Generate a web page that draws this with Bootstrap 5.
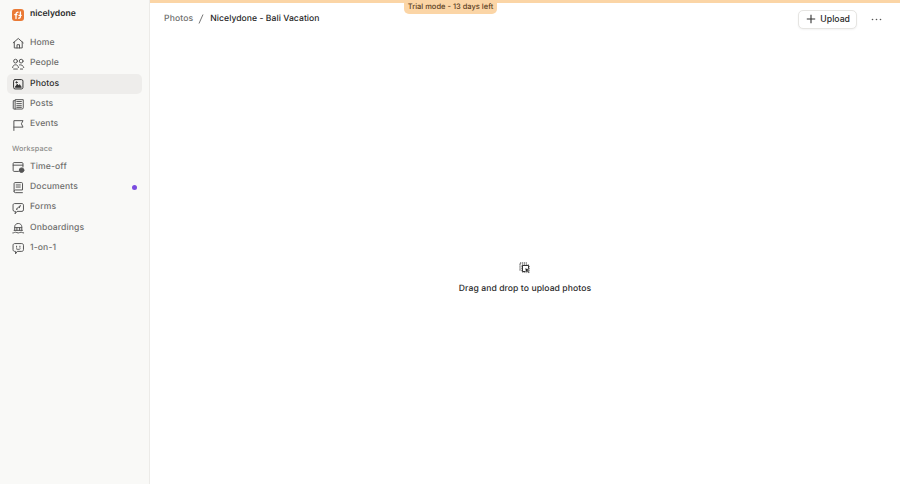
<!doctype html>
<html lang="en">
<head>
<meta charset="utf-8">
<title>Photos</title>
<link href="https://cdn.jsdelivr.net/npm/bootstrap@5.3.0/dist/css/bootstrap.min.css" rel="stylesheet">
<style>
html,body{height:100%;margin:0}
body{font-family:Inter,"Liberation Sans",sans-serif;font-size:8.6px;color:#1f1f1f;background:#fff;overflow:hidden;text-rendering:geometricPrecision}
.shell{height:484px}
.side{width:150px;flex:none;background:#f9f9f7;border-right:1px solid #ecebe8;padding:0 7px}
.brand{height:29px;padding-left:5px;gap:6px;font-weight:600;font-size:8.6px;color:#2b2b2b}
.logo{width:12px;height:12px;border-radius:3px;background:#ea7a35;flex:none}
.logo svg{display:block}
.side-list{margin:0;padding:0;list-style:none}
.top-list{margin-top:4.500px}
.nav-row{height:20px;margin-bottom:.35px;padding-left:5px;padding-right:5px;gap:5.500px;border-radius:5px;color:#6f6f6d;font-weight:500;letter-spacing:.12px}
.nav-row svg{width:12.500px;height:12.500px;flex:none;stroke:#555;fill:none;stroke-width:.95;stroke-linecap:round;stroke-linejoin:round}
.nav-row.on{background:#eeedeb;color:#2d2d2d}
.nav-row.on svg{stroke:#333}
.sect{color:#8c8c8a;font-size:7.300px;font-weight:500;letter-spacing:.1px;padding:8px 0 0 5px;height:22px;line-height:12px}
.dot{width:5px;height:5px;border-radius:50%;background:#7b4ce0}
.main{position:relative;min-width:0}
.trial-line{height:2.500px;background:#fbd5a6}
.trial{position:absolute;top:0;left:254px;width:93px;height:14px;padding-bottom:1px;text-align:center;background:#fbd5a6;border-radius:0 0 5px 5px;font-size:7.500px;font-weight:500;color:#5c3f1f;line-height:13px}
.head{height:32.500px;padding:1px 18px 0 14px}
.crumb-a{color:#6f6f6d;font-weight:500;letter-spacing:.12px}
.crumb-s{width:6px;margin:0 6px 0 5px;color:#666}
.crumb-b{color:#262626;font-weight:500;letter-spacing:.05px}
.up{height:19px;padding:0 6px 0 7px;gap:4px;font-size:8.700px;font-weight:500;color:#2a2a2a;background:#fff;border:1px solid #e6e5e2;border-radius:5px;box-shadow:0 1px 2px rgba(0,0,0,.05);line-height:1}
.up svg{width:10px;height:10px;stroke:#333;stroke-width:1.100;fill:none}
.more{margin-left:14px;width:11px}
.more svg{display:block}
.drop{flex:1;padding-top:38px}
.drop svg{width:12px;height:12px;fill:none;stroke:#333;stroke-width:1}
.drop-t{margin-top:9px;font-weight:500;color:#2a2a2a;font-size:8.600px;letter-spacing:.08px}
</style>
</head>
<body>
<div class="shell d-flex">
  <aside class="side">
    <div class="brand d-flex align-items-center">
      <span class="logo"><svg viewBox="0 0 12 12" width="12" height="12"><path d="M4 9.500V5.200C4 3.800 5 3.200 6 3.200M6.600 9.200C7.600 9.200 8.400 8.400 8.400 7.200V2.800M2.800 5.600H5M7 6.400H9.200" fill="none" stroke="#fff" stroke-width="1.300" stroke-linecap="round"/></svg></span>
      <span>nicelydone</span>
    </div>
    <ul class="side-list top-list">
      <li class="nav-row d-flex align-items-center"><svg viewBox="0 0 12 12"><path d="M1.200 5.600 6 1.400l4.800 4.200M2.200 4.800v5.700h7.600V4.800M4.800 10.500V7.400h2.400v3.100"/></svg><span>Home</span></li>
      <li class="nav-row d-flex align-items-center"><svg viewBox="0 0 12 12"><circle cx="3.400" cy="3" r="1.800"/><circle cx="8.800" cy="3" r="1.800"/><path d="M.6 9.200C.8 7.300 2 6.500 3.400 6.500s2.600.8 2.800 2.700M7.200 6.600c1.900-.4 3.700.6 4.100 2.600M1.600 10.600h3.600M8 10.600h2.200"/></svg><span>People</span></li>
      <li class="nav-row on d-flex align-items-center"><svg viewBox="0 0 12 12"><rect x="1.500" y="1.500" width="9" height="9" rx="1.500"/><path d="M3.300 8.600 5 6l1.300 1.400.9-1 1.500 2.200z" fill="#333"/><circle cx="4.300" cy="4.200" r=".6" fill="#333"/></svg><span>Photos</span></li>
      <li class="nav-row d-flex align-items-center"><svg viewBox="0 0 12 12"><path d="M3 2.600H1.200v7.400c0 .4.3.6.6.6H9.600c.7 0 1.200-.5 1.200-1.200V1.600H3v9"/><path d="M4.600 3.400h4.400M4.600 5.400h4.400M4.600 7.400h4.400M4.600 9h4.400"/></svg><span>Posts</span></li>
      <li class="nav-row d-flex align-items-center"><svg viewBox="0 0 12 12"><path d="M1.800 11V1.600h8.800L9 4.600l1.600 3.200H1.800"/></svg><span>Events</span></li>
    </ul>
    <div class="sect">Workspace</div>
    <ul class="side-list">
      <li class="nav-row d-flex align-items-center"><svg viewBox="0 0 12 12"><path d="M6.200 10H2c-.5 0-.9-.4-.9-.9V2.400c0-.5.4-.9.9-.9h7.600c.5 0 .9.4.9.9v3.400M1.100 4h9.400"/><circle cx="9.200" cy="8.800" r="2.200" fill="#555"/></svg><span>Time-off</span></li>
      <li class="nav-row d-flex align-items-center"><svg viewBox="0 0 12 12"><path d="M2 10V2.400c0-.5.4-.9.9-.9h6.400c.5 0 .8.4.8.9v6.200H3.200C2.500 8.600 2 9.200 2 10s.5 1.200 1.200 1.200H10M4 3.800h4M4 5.800h4"/></svg><span class="flex-grow-1">Documents</span><span class="dot"></span></li>
      <li class="nav-row d-flex align-items-center"><svg viewBox="0 0 12 12"><path d="M3 11l.4-2H2.400C1.600 9 1 8.400 1 7.600V3C1 2.200 1.600 1.500 2.400 1.500h7.200C10.400 1.500 11 2.200 11 3v4.600C11 8.400 10.400 9 9.600 9H5.200z"/><path d="M4.400 6.600 7.800 3.600M4.200 7l.9-.2M7 5.600l1-2"/></svg><span>Forms</span></li>
      <li class="nav-row d-flex align-items-center"><svg viewBox="0 0 12 12"><path d="M.8 10.500c1.400 0 1.400-.7 2.600-.7s1.300.7 2.600.7 1.300-.7 2.600-.7 1.200.7 2.600.7M2.600 8V4.600C2.600 2.800 4 1.400 6 1.400s3.400 1.400 3.400 3.200V8M2.600 5.400h6.800M4.700 5.400V8M7.300 5.400V8M2 8h8"/></svg><span>Onboardings</span></li>
      <li class="nav-row d-flex align-items-center"><svg viewBox="0 0 12 12"><path d="M3.400 11V9H2.600C1.700 9 1 8.300 1 7.400V3.100C1 2.200 1.700 1.500 2.600 1.500h6.800c.9 0 1.600.7 1.600 1.600v4.300C11 8.300 10.300 9 9.400 9H5.400z"/><path d="M4.400 4v1M7.600 4v1M4.200 6.600c1 .7 2.600.7 3.600 0"/></svg><span>1-on-1</span></li>
    </ul>
  </aside>
  <main class="main flex-grow-1 d-flex flex-column">
    <div class="trial-line"></div>
    <div class="trial">Trial mode - 13 days left</div>
    <header class="head d-flex align-items-center">
      <span class="crumb-a">Photos</span>
      <svg class="crumb-s" viewBox="0 0 6 10" width="6" height="10"><path d="M1 9.500 5 .5" stroke="#666" stroke-width=".9" fill="none"/></svg>
      <span class="crumb-b">Nicelydone - Bali Vacation</span>
      <button type="button" class="btn up d-flex align-items-center ms-auto"><svg viewBox="0 0 10 10"><path d="M5 .8v8.400M.8 5h8.400"/></svg>Upload</button>
      <span class="more"><svg viewBox="0 0 11 3" width="11" height="3"><circle cx="1.500" cy="1.500" r=".8" fill="#555"/><circle cx="5.500" cy="1.500" r=".8" fill="#555"/><circle cx="9.500" cy="1.500" r=".8" fill="#555"/></svg></span>
    </header>
    <section class="drop d-flex flex-column align-items-center justify-content-center">
      <svg viewBox="0 0 12 12"><path d="M1 8.500V1.500M1 1h7M3 3h6.500c.3 0 .5.2.5.5V9.500c0 .3-.2.500-.5.500H3.500C3.200 10 3 9.800 3 9.500z" stroke-dasharray="1.200 .7"/><path d="M3.500 3.500h6v6h-6z"/><path d="M6 6l4.800 1.600-2 .9 1.900 2-.8.8-2-1.900-.9 2z" fill="#222" stroke="#fff" stroke-width=".5"/></svg>
      <div class="drop-t">Drag and drop to upload photos</div>
    </section>
  </main>
</div>
<script src="https://cdn.jsdelivr.net/npm/bootstrap@5.3.0/dist/js/bootstrap.bundle.min.js"></script>
</body>
</html>
